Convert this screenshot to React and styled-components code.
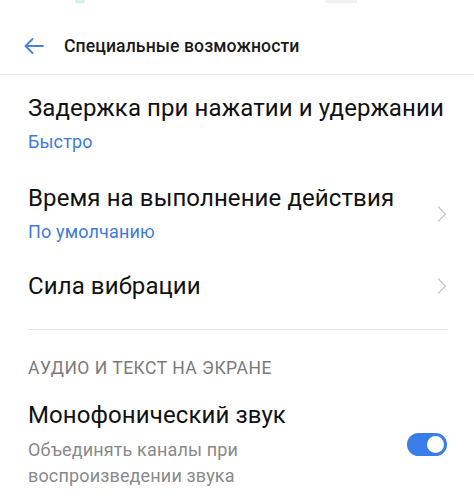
import React from "react";
import styled, { createGlobalStyle } from "styled-components";

const Global = createGlobalStyle`
  html, body { margin: 0; padding: 0; background: #fff; }
  body { font-family: Roboto, "Noto Sans", "Liberation Sans", sans-serif; -webkit-font-smoothing: antialiased; }
`;

const Page = styled.div`
  width: 474px;
  height: 502px;
  overflow: hidden;
  background: #fff;
  display: flex;
  flex-direction: column;
`;

const StatusBar = styled.div`
  height: 18px;
  display: flex;
  align-items: flex-start;
  padding-left: 75px;
  gap: 240px;
`;

const StatusMark = styled.div`
  width: ${(p) => p.$w}px;
  height: 3px;
  background: ${(p) => p.$c};
  opacity: 0.4;
  border-radius: 0 0 1px 1px;
`;

const Header = styled.div`
  height: 56px;
  display: flex;
  align-items: center;
  padding-left: 24px;
  gap: 20px;
  border-bottom: 1px solid #ececec;
  box-shadow: 0 1px 2px rgba(0, 0, 0, 0.03);
`;

const Title = styled.div`
  font-size: 17.6px;
  font-weight: 500;
  color: #1a1a1a;
  letter-spacing: 0.1px;
`;

const List = styled.div`
  display: flex;
  flex-direction: column;
  padding: 4px 27px 0 28px;
`;

const Item = styled.div`
  display: flex;
  align-items: center;
  justify-content: space-between;
  padding: ${(p) => p.$pad || "13px 0"};
`;

const Texts = styled.div`
  display: flex;
  flex-direction: column;
`;

const ItemTitle = styled.div`
  font-size: 24px;
  line-height: 32px;
  color: #111;
  letter-spacing: 0.1px;
`;

const ItemSub = styled.div`
  font-size: 18px;
  line-height: 26px;
  margin-top: ${(p) => p.$mt || 5}px;
  color: ${(p) => (p.$blue ? "#3f7ad8" : "#8a8a8a")};
  letter-spacing: 0.15px;
`;

const Divider = styled.div`
  height: 1px;
  background: #e6e6e6;
  margin-top: 14px;
`;

const SectionHeader = styled.div`
  font-size: 17.5px;
  line-height: 20px;
  color: #7a7a7a;
  margin: 28px 0 21px;
  letter-spacing: 0.5px;
`;

const Toggle = styled.div`
  width: 40px;
  height: 23px;
  border-radius: 12px;
  background: #3a7de8;
  display: flex;
  align-items: center;
  justify-content: flex-end;
  padding-right: 3px;
  box-sizing: border-box;
  flex-shrink: 0;
`;

const Knob = styled.div`
  width: 17px;
  height: 17px;
  border-radius: 50%;
  background: #fff;
`;

const Chevron = () => (
  <svg width="10" height="16" viewBox="0 0 10 16" style={{ flexShrink: 0 }}>
    <path d="M1.5 1 L8.5 8 L1.5 15" fill="none" stroke="#c9c9c9" strokeWidth="1.4" strokeLinecap="round" strokeLinejoin="round" />
  </svg>
);

const BackArrow = () => (
  <svg width="20" height="16" viewBox="0 0 20 16">
    <path d="M1.5 8 H19 M8.5 1 L1.5 8 L8.5 15" fill="none" stroke="#4a80d8" strokeWidth="1.8" strokeLinecap="round" strokeLinejoin="round" />
  </svg>
);

export default function App() {
  return (
    <Page>
      <Global />
      <StatusBar>
        <StatusMark $w={10} $c="#8fd9bd" />
        <StatusMark $w={32} $c="#dddddd" />
      </StatusBar>
      <Header>
        <BackArrow />
        <Title>Специальные возможности</Title>
      </Header>
      <List>
        <Item>
          <Texts>
            <ItemTitle>Задержка при нажатии и удержании</ItemTitle>
            <ItemSub $blue>Быстро</ItemSub>
          </Texts>
        </Item>
        <Item $pad="14px 0 13px">
          <Texts>
            <ItemTitle>Время на выполнение действия</ItemTitle>
            <ItemSub $blue>По умолчанию</ItemSub>
          </Texts>
          <Chevron />
        </Item>
        <Item $pad="12px 0 13px">
          <Texts>
            <ItemTitle>Сила вибрации</ItemTitle>
          </Texts>
          <Chevron />
        </Item>
        <Divider />
        <SectionHeader>АУДИО И ТЕКСТ НА ЭКРАНЕ</SectionHeader>
        <Item $pad="0">
          <Texts>
            <ItemTitle>Монофонический звук</ItemTitle>
            <ItemSub $mt={6}>
              Объединять каналы при
              <br />
              воспроизведении звука
            </ItemSub>
          </Texts>
          <Toggle>
            <Knob />
          </Toggle>
        </Item>
      </List>
    </Page>
  );
}
